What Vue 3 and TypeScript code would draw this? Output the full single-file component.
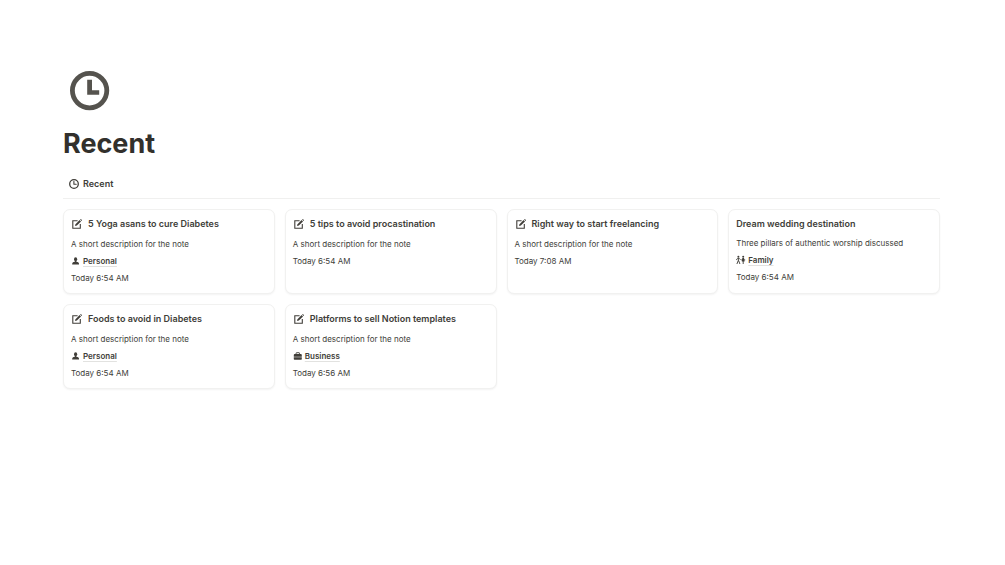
<script setup lang="ts">
type TagIcon = 'person' | 'family' | 'briefcase'

interface Note {
  title: string
  description: string
  date: string
  edit: boolean
  tag?: { label: string; icon: TagIcon }
}

const summary = 'A short description for the note'

const notes: Note[] = [
  { title: '5 Yoga asans to cure Diabetes', description: summary, date: 'Today 6:54 AM', edit: true, tag: { label: 'Personal', icon: 'person' } },
  { title: '5 tips to avoid procastination', description: summary, date: 'Today 6:54 AM', edit: true },
  { title: 'Right way to start freelancing', description: summary, date: 'Today 7:08 AM', edit: true },
  { title: 'Dream wedding destination', description: 'Three pillars of authentic worship discussed', date: 'Today 6:54 AM', edit: false, tag: { label: 'Family', icon: 'family' } },
  { title: 'Foods to avoid in Diabetes', description: summary, date: 'Today 6:54 AM', edit: true, tag: { label: 'Personal', icon: 'person' } },
  { title: 'Platforms to sell Notion templates', description: summary, date: 'Today 6:56 AM', edit: true, tag: { label: 'Business', icon: 'briefcase' } },
]
</script>

<template>
  <main class="page">
    <svg class="page-icon" viewBox="0 0 40 40" aria-hidden="true">
      <circle cx="19.6" cy="19.6" r="17.2" fill="none" stroke="currentColor" stroke-width="4.8" />
      <path d="M17.2 8.8H22v10.4h7.2v4.6h-12z" fill="currentColor" />
    </svg>
    <h1 class="title">Recent</h1>

    <nav class="tabs" aria-label="Views">
      <button class="tab" type="button">
        <svg class="tab-icon" viewBox="0 0 10 10" aria-hidden="true">
          <circle cx="5" cy="5" r="4.3" fill="none" stroke="currentColor" stroke-width="1.3" />
          <path d="M4.9 2.4v2.8h2.3" fill="none" stroke="currentColor" stroke-width="1.1" stroke-linecap="round" stroke-linejoin="round" />
        </svg>
        <span>Recent</span>
      </button>
    </nav>

    <section class="gallery" aria-label="Recent notes">
      <article v-for="note in notes" :key="note.title" class="card">
        <h2 class="card-title" :class="{ 'with-icon': note.edit }">
          <svg v-if="note.edit" class="edit-icon" viewBox="0 0 12 12" aria-hidden="true">
            <path d="M6.6 2.7H1.8v7.5h7.5V6" fill="none" stroke="currentColor" stroke-width="1.1" />
            <path d="M4 8.1l.5-1.9 4.1-4.1 1.4 1.4-4.1 4.1z" fill="currentColor" />
            <path d="M9.1 1.6l.4-.4q.3-.3.6 0l.8.8q.3.3 0 .6l-.4.4z" fill="currentColor" />
          </svg>
          <span>{{ note.title }}</span>
        </h2>
        <div class="properties">
          <p class="line">{{ note.description }}</p>
          <p v-if="note.tag" class="line tag">
            <svg v-if="note.tag.icon === 'person'" class="tag-icon" viewBox="0 0 10 10" aria-hidden="true">
              <ellipse cx="4.6" cy="3.2" rx="1.6" ry="1.9" fill="currentColor" />
              <path d="M3.8 4.5h1.6v1.2q2.4.4 2.6 1.7v1.2H1.2V7.4q.2-1.3 2.6-1.7z" fill="currentColor" />
            </svg>
            <svg v-else-if="note.tag.icon === 'family'" class="tag-icon" viewBox="0 0 10 10" aria-hidden="true">
              <circle cx="2.4" cy="1.7" r="1" fill="currentColor" />
              <circle cx="7.2" cy="1.7" r="1" fill="currentColor" />
              <path d="M.3 5.1l1.2-1.7h1.8l1.2 1.4M2.4 3.3v3M2.2 5.7L.9 9M2.7 5.7L3.9 9M5.2 4.9h4M7.2 3.2V9" fill="none" stroke="currentColor" stroke-width=".9" />
              <path d="M6.4 3H8l.6 3.6H5.8z" fill="currentColor" />
            </svg>
            <svg v-else class="tag-icon" viewBox="0 0 10 10" aria-hidden="true">
              <path d="M3.1 3.4V2.2q0-.5.5-.5H6q.5 0 .5.5v1.2" fill="none" stroke="currentColor" stroke-width=".9" />
              <path d="M1.8 3h6q1 0 1 .9v1.8h-8V3.9q0-.9 1-.9z" fill="currentColor" />
              <path d="M.8 6.2h8v1.9q0 .6-.6.6H1.4q-.6 0-.6-.6z" fill="currentColor" />
            </svg>
            <a class="tag-link" href="#">{{ note.tag.label }}</a>
          </p>
          <p class="line">{{ note.date }}</p>
        </div>
      </article>
    </section>
  </main>
</template>

<style>
body {
  margin: 0;
  background: #fff;
}
</style>

<style scoped>
.page {
  padding: 71px 65px 40px 63px;
  color: #403e39;
  font-family: Inter, "Liberation Sans", sans-serif;
  font-size: 8px;
}

.page-icon {
  display: block;
  width: 40px;
  height: 40px;
  margin-left: 7px;
  color: #55534e;
}

.title {
  margin: 16px 0 0;
  color: #32302c;
  font-size: 27px;
  font-weight: 700;
  line-height: 34px;
}

.tabs {
  display: flex;
  padding: 13px 0 4px 6px;
  border-bottom: 1px solid #f0f0ef;
}

.tab {
  display: flex;
  align-items: center;
  gap: 4px;
  padding: 0;
  border: 0;
  background: none;
  color: inherit;
  font: 600 9px/20px Inter, "Liberation Sans", sans-serif;
  cursor: pointer;
}

.tab-icon {
  width: 10px;
  height: 10px;
}

.gallery {
  display: grid;
  grid-template-columns: repeat(4, minmax(0, 1fr));
  gap: 10px;
  padding-top: 10px;
}

.card {
  padding: 7px 7px 9px;
  border: 1px solid #f1f1f0;
  border-radius: 7px;
  background: #fff;
  box-shadow: 0 1px 2px #0000000d;
}

.card-title {
  display: flex;
  align-items: center;
  gap: 5px;
  margin: 0 0 6px;
  font-size: 9px;
  font-weight: 600;
  line-height: 14px;
}

.with-icon {
  margin-bottom: 7px;
}

.edit-icon {
  width: 12px;
  height: 12px;
}

.properties {
  display: grid;
  gap: 5px;
}

.line {
  margin: 0;
  line-height: 12px;
}

.tag {
  display: flex;
  align-items: center;
  gap: 2px;
}

.tag-icon {
  width: 10px;
  height: 10px;
}

.tag-link {
  color: inherit;
  font-weight: 600;
  line-height: 12px;
  text-decoration: underline;
  text-decoration-color: #e2e2e0;
  text-decoration-thickness: 1px;
  text-underline-offset: 2px;
}
</style>
